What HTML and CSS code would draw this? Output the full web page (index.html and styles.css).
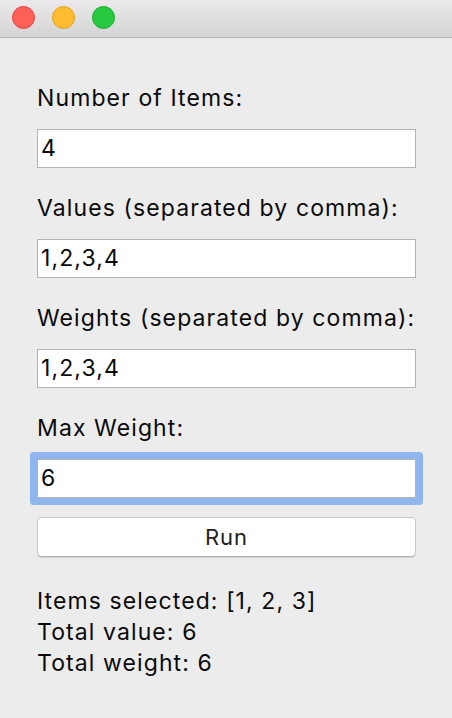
FILE: index.html
```html
<!DOCTYPE html>
<html>
<head>
<meta charset="utf-8">
<link rel="stylesheet" href="styles.css">
</head>
<body>
<div class="window">
  <div class="titlebar">
    <span class="light red"></span>
    <span class="light yellow"></span>
    <span class="light green"></span>
  </div>
  <div class="content">
    <div class="label">Number of Items:</div>
    <div class="entry">4</div>
    <div class="label">Values (separated by comma):</div>
    <div class="entry">1,2,3,4</div>
    <div class="label">Weights (separated by comma):</div>
    <div class="entry">1,2,3,4</div>
    <div class="label">Max Weight:</div>
    <div class="entry focused">6</div>
    <div class="button">Run</div>
    <div class="results">
      <div class="line">Items selected: [1, 2, 3]</div>
      <div class="line">Total value: 6</div>
      <div class="line">Total weight: 6</div>
    </div>
  </div>
</div>
</body>
</html>
```

FILE: styles.css
```css
html, body {
  margin: 0;
  padding: 0;
  background: #ececec;
}
.window {
  width: 452px;
  height: 718px;
  background: #ececec;
  font-family: Inter, "Liberation Sans", sans-serif;
  color: #0a0a0a;
  overflow: hidden;
}
.titlebar {
  height: 38px;
  box-sizing: border-box;
  display: flex;
  align-items: center;
  gap: 17px;
  padding: 0 0 2px 12px;
  background: linear-gradient(#ebe9eb, #d5d4d5);
  border-bottom: 1px solid #b8b8b8;
}
.light {
  width: 23px;
  height: 23px;
  border-radius: 50%;
  box-sizing: border-box;
}
.red { background: #fe5f57; border: 1px solid #e0443e; }
.yellow { background: #febc2e; border: 1px solid #dea123; }
.green { background: #28c840; border: 1px solid #1aab29; }
.content {
  padding: 45px 36px 0 37px;
  display: flex;
  flex-direction: column;
}
.label {
  font-size: 23px;
  letter-spacing: 1.1px;
  line-height: 30px;
  height: 30px;
  margin-bottom: 16px;
}
.entry {
  height: 39px;
  box-sizing: border-box;
  background: #fff;
  border: 1px solid #b3b3b3;
  font-size: 23px;
  letter-spacing: 1.1px;
  line-height: 37px;
  padding-left: 3px;
  margin-bottom: 25px;
}
.entry.focused {
  box-shadow: 0 0 0 7px #8fb7ee;
  border-radius: 1px;
  margin-bottom: 19px;
}
.button {
  height: 40px;
  box-sizing: border-box;
  background: #fff;
  border: 1px solid #c8c8c8;
  border-bottom-color: #b0b0b0;
  border-radius: 5px;
  box-shadow: 0 1px 1px rgba(0,0,0,0.12);
  text-align: center;
  font-size: 22px;
  letter-spacing: 1px;
  line-height: 38px;
  color: #222;
}
.results {
  margin-top: 29px;
  display: flex;
  flex-direction: column;
}
.line {
  font-size: 23px;
  letter-spacing: 1.1px;
  line-height: 31px;
}
```
